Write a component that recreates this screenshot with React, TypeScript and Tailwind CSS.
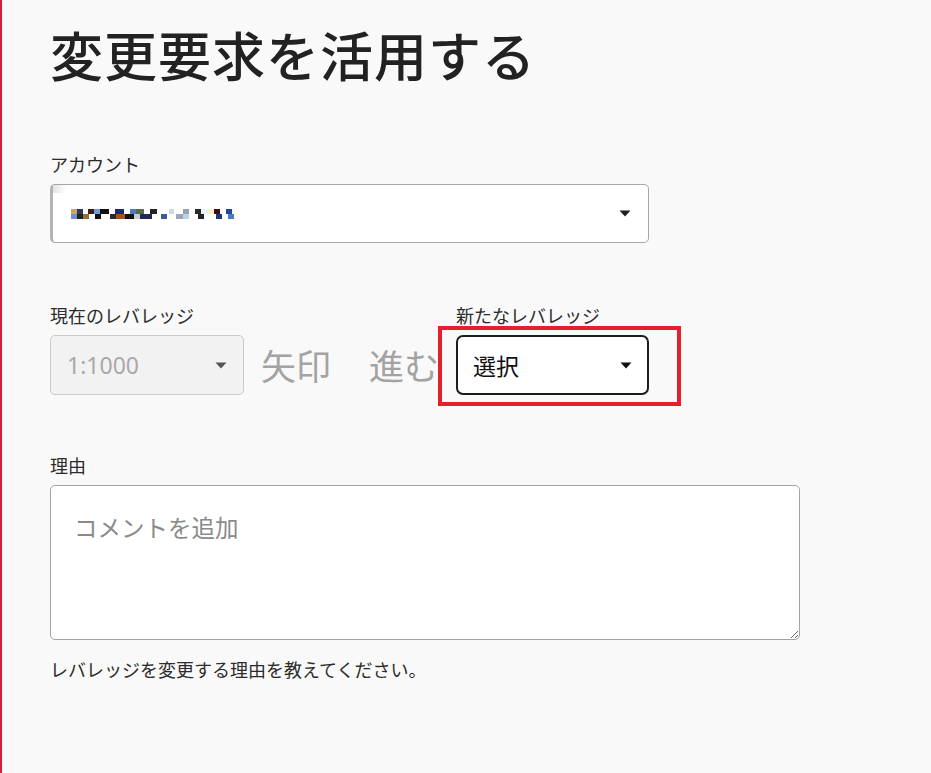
import React from "react";

const FONT = "font-['Noto_Sans_CJK_JP','Noto_Sans',sans-serif]";

// pixelated (redacted) account id, two rows of tiny blocks
const PIXELS_TOP = [
  "w-[6px] bg-[#c9a56c]", "w-[6px] bg-[#2b3a5c]", "w-[5px] bg-transparent", "w-[6px] bg-[#3b1d14]",
  "w-[6px] bg-[#6f9bd8]", "w-[9px] bg-[#111]", "w-[6px] bg-transparent", "w-[9px] bg-[#1d2870]",
  "w-[6px] bg-transparent", "w-[6px] bg-[#4f7fb8]", "w-[8px] bg-[#5a6b4c]", "w-[6px] bg-transparent",
  "w-[7px] bg-[#222]", "w-[12px] bg-transparent", "w-[5px] bg-[#c8d7ea]", "w-[9px] bg-transparent",
  "w-[6px] bg-[#94a2b8]", "w-[6px] bg-transparent", "w-[6px] bg-[#2a2a2a]", "w-[7px] bg-[#e6f3f6]",
  "w-[6px] bg-[#f7f3c8]", "w-[6px] bg-[#3b0d16]", "w-[6px] bg-transparent", "w-[6px] bg-[#21479b]",
];
const PIXELS_BOTTOM = [
  "w-[6px] bg-[#6b92c9]", "w-[6px] bg-[#222]", "w-[6px] bg-[#9c6b3c]", "w-[6px] bg-transparent",
  "w-[6px] bg-[#111]", "w-[9px] bg-transparent", "w-[6px] bg-[#2a2a2a]", "w-[9px] bg-[#a8511d]",
  "w-[9px] bg-[#111]", "w-[6px] bg-[#ccc]", "w-[12px] bg-[#1e2a55]", "w-[9px] bg-transparent",
  "w-[6px] bg-[#365d9a]", "w-[9px] bg-transparent", "w-[7px] bg-[#9aa7b9]", "w-[6px] bg-[#bcd0e6]",
  "w-[9px] bg-transparent", "w-[6px] bg-[#222]", "w-[12px] bg-transparent", "w-[6px] bg-[#19367a]",
  "w-[6px] bg-transparent", "w-[6px] bg-[#4a7bc3]",
];

function Caret({ className }: { className: string }) {
  return (
    <svg width="12" height="7" viewBox="0 0 12 7" className={className}>
      <path d="M0.5 0.5h11L6 6.5z" fill="currentColor" />
    </svg>
  );
}

function Label({ children }: { children: React.ReactNode }) {
  return <p className="text-[18px] leading-[26px] text-[#2b2b2b]">{children}</p>;
}

export default function App() {
  return (
    <div className={`${FONT} min-h-screen border-l-2 border-[#d41f3d] bg-[#f9f9f9] pl-12 pt-[22px]`}>
      <h1 className="text-[53px] leading-[64px] font-medium tracking-[1px] text-[#222]">
        変更要求を活用する
      </h1>

      <div className="mt-[65px]">
        <Label>アカウント</Label>
        <div className="relative mt-[7px] flex h-[59px] w-[599px] items-center rounded-[5px] border border-[#a7a7a7] border-l-[3px] border-l-[#b3b3b3] bg-white pl-[18px] pr-[17px]">
          <span className="absolute left-0 top-0 h-[8px] w-[14px] bg-gradient-to-r from-[#e2e2e2] to-transparent" />
          <div className="flex flex-1 flex-col gap-0">
            <div className="flex h-[5px]">
              {PIXELS_TOP.map((c, i) => (
                <span key={i} className={`h-[5px] ${c}`} />
              ))}
            </div>
            <div className="flex h-[5px]">
              {PIXELS_BOTTOM.map((c, i) => (
                <span key={i} className={`h-[5px] ${c}`} />
              ))}
            </div>
          </div>
          <Caret className="text-[#1f1f1f]" />
        </div>
      </div>

      <div className="mt-[59px] flex items-end">
        <div className="flex flex-col">
          <Label>現在のレバレッジ</Label>
          <div className="mt-[7px] flex h-[60px] w-[194px] items-center justify-between rounded-[5px] border border-[#cacaca] bg-[#f2f2f2] pl-[16px] pr-[16px]">
            <span className="font-['Noto_Sans',sans-serif] text-[23px] text-[#a9a9a9]">1:1000</span>
            <Caret className="text-[#555]" />
          </div>
        </div>
        <span className="ml-[17px] flex h-[60px] items-center text-[35px] text-[#a3a3a3]">矢印</span>
        <span className="ml-[38px] flex h-[60px] items-center text-[35px] text-[#a3a3a3]">進む</span>
        <div className="ml-[17px] flex flex-col">
          <Label>新たなレバレッジ</Label>
          <div className="relative mt-[7px]">
            <div className="flex h-[60px] w-[193px] items-center justify-between rounded-[7px] border-2 border-[#1c1c1c] bg-white pl-[15px] pr-[15px]">
              <span className="text-[23px] text-[#111]">選択</span>
              <Caret className="text-[#111]" />
            </div>
            <div className="pointer-events-none absolute -left-[18px] -right-[32px] -top-[9px] -bottom-[11px] border-4 border-[#e3202b]" />
          </div>
        </div>
      </div>

      <div className="mt-[57px]">
        <Label>理由</Label>
        <textarea
          className="mt-[7px] block h-[155px] w-[750px] rounded-[5px] border border-[#a3a3a3] bg-white pl-[23px] pr-6 pt-[24px] text-[23.5px] leading-[34px] text-[#222] outline-none placeholder:text-[#8a8a8a]"
          placeholder="コメントを追加"
        />
        <p className="mt-[16px] text-[18px] leading-[26px] text-[#2b2b2b]">
          レバレッジを変更する理由を教えてください。
        </p>
      </div>
    </div>
  );
}
